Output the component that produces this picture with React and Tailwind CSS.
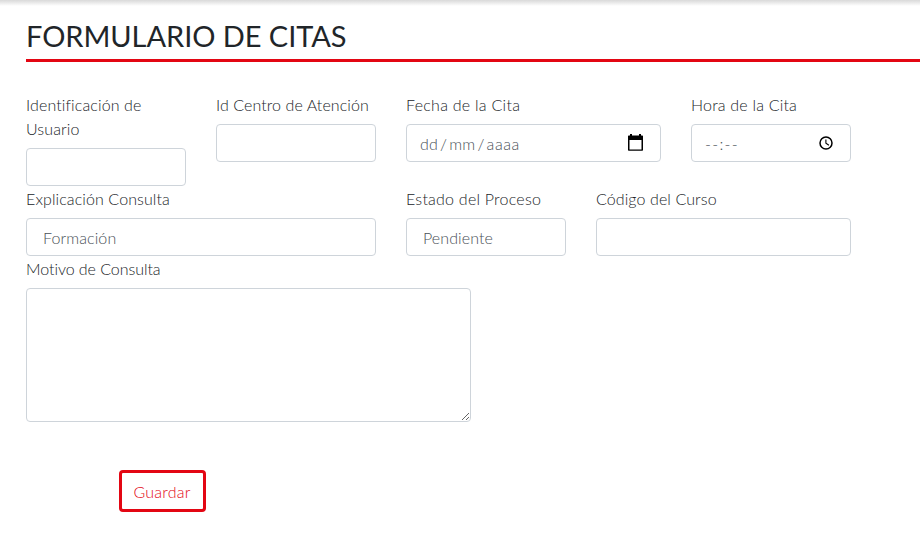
const control =
  'block h-[38px] w-full rounded-[4px] border border-[#ced4da] bg-white text-base font-light text-[#495057] outline-none';

function Field({ label, labelClass, className, children }) {
  return (
    <div className={className}>
      <label className={`mb-[7px] block pt-px leading-6 ${labelClass}`}>{label}</label>
      {children}
    </div>
  );
}

function CalendarIcon() {
  return (
    <svg width="15" height="18" viewBox="0 0 15 18" aria-hidden="true">
      <path fill="#000" fillRule="evenodd" d="M2 0h2v1.500h7V0h2v1.500h1.300q.7 0 .7.7v13.900q0 .7-.7.7H.7q-.7 0-.7-.7V2.200q0-.7.7-.7H2zM1.500 6v9.500h12V6z" />
    </svg>
  );
}

function ClockIcon() {
  return (
    <svg width="14" height="14" viewBox="0 0 14 14" fill="none" stroke="#000" aria-hidden="true">
      <circle cx="7" cy="7" r="6" strokeWidth="1.500" />
      <path d="M6.900 3.500v3.800l3 1.900" strokeWidth="1.100" />
    </svg>
  );
}

export default function App() {
  return (
    <div className="h-[547px] overflow-hidden bg-white font-['Lato','Open_Sans',sans-serif] text-base font-light text-[#212529]">
      <div className="h-[6px] bg-linear-to-b from-[#d9d9d9] to-white" />
      <main className="pl-[26px]">
        <h1 className="h-14 border-b-[3px] border-[#e30613] pt-[12px] text-[29px] leading-[36px] font-normal tracking-[-0.05px] whitespace-nowrap">
          FORMULARIO DE CITAS
        </h1>
        <form className="pt-[30px]" onSubmit={(e) => e.preventDefault()}>
          <div className="flex items-start gap-[30px]">
            <Field label="Identificación de Usuario" className="w-[160px]" labelClass="w-[130px] tracking-[0.12px]">
              <input className={control} />
            </Field>
            <Field label="Id Centro de Atención" className="w-[160px]" labelClass="whitespace-nowrap tracking-[0.08px]">
              <input className={control} />
            </Field>
            <Field label="Fecha de la Cita" className="w-[255px]" labelClass="tracking-[0.27px]">
              <div className={`${control} flex! items-center justify-between pr-[17px] pl-[13px]`}>
                <span className="pt-[2px] tracking-[0.2px]">
                  dd<span className="mx-[2px]">/</span>mm<span className="mx-[2px]">/</span>
                  <span className="tracking-[0.6px]">aaaa</span>
                </span>
                <CalendarIcon />
              </div>
            </Field>
            <Field label="Hora de la Cita" className="w-[160px]" labelClass="tracking-[0.2px]">
              <div className={`${control} flex! items-center justify-between pr-[17px] pl-[13px]`}>
                <span className="pt-[2px] tracking-[1.3px]">--:--</span>
                <ClockIcon />
              </div>
            </Field>
          </div>
          <div className="flex items-start gap-[30px]">
            <Field label="Explicación Consulta" className="w-[350px]" labelClass="tracking-[0.1px]">
              <div className={`${control} pt-[7px] pl-4 leading-6 tracking-[0.1px]`}>Formación</div>
            </Field>
            <Field label="Estado del Proceso" className="w-[160px]" labelClass="tracking-[0.23px]">
              <div className={`${control} pt-[7px] pl-4 leading-6 tracking-[0.1px]`}>Pendiente</div>
            </Field>
            <Field label="Código del Curso" className="w-[255px]" labelClass="tracking-[0.1px]">
              <input className={control} />
            </Field>
          </div>
          <Field label="Motivo de Consulta" className="w-[445px]" labelClass="tracking-[-0.05px]">
            <textarea className="block h-[134px] w-full resize rounded-[4px] border border-[#ced4da] bg-white px-3 py-1.5 outline-none" />
          </Field>
          <button className="mt-12 ml-[93px] block h-[42px] w-[87px] rounded-[4px] border-[3px] border-[#e30613] pt-[2px] pr-[1px] font-light tracking-[0.2px] whitespace-nowrap text-[#e30613]">
            Guardar
          </button>
        </form>
      </main>
    </div>
  );
}
